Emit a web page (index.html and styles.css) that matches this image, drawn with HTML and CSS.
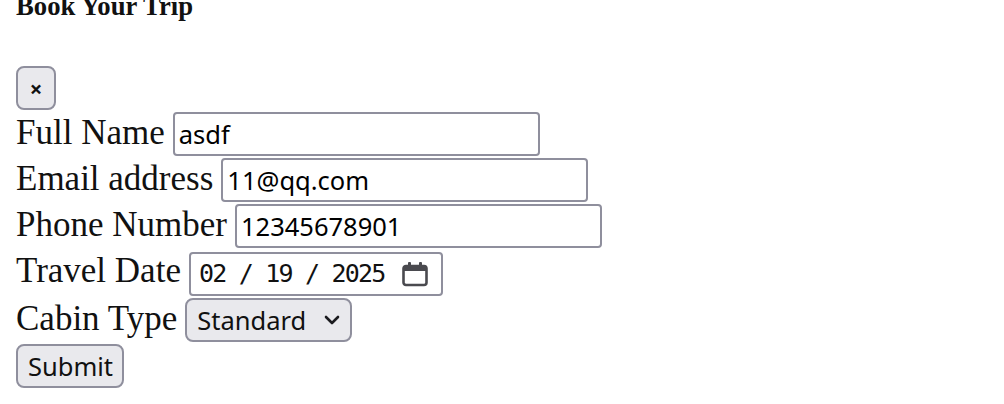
FILE: index.html
```html
<!DOCTYPE html>
<html lang="en">
<head>
<meta charset="utf-8">
<title>Book Your Trip</title>
<link rel="stylesheet" href="styles.css">
</head>
<body>
<h1 class="title">Book Your Trip</h1>
<form class="trip-form">
  <button type="button" class="btn close-btn">×</button>
  <div class="row">
    <label class="lbl" for="fullname">Full Name</label>
    <input class="field" id="fullname" type="text" value="asdf">
  </div>
  <div class="row">
    <label class="lbl" for="email">Email address</label>
    <input class="field" id="email" type="email" value="11@qq.com">
  </div>
  <div class="row row-phone">
    <label class="lbl" for="phone">Phone Number</label>
    <input class="field" id="phone" type="tel" value="12345678901">
  </div>
  <div class="row">
    <label class="lbl">Travel Date</label>
    <div class="field date-field">
      <span class="date-text">02 / 19 / 2025</span>
      <svg class="cal-icon" width="28" height="26" viewBox="0 0 28 26" aria-hidden="true">
        <rect x="2.5" y="5" width="23" height="19" rx="2.5" fill="none" stroke="#4a4a4f" stroke-width="2.6"/>
        <rect x="2.5" y="5" width="23" height="5" fill="#4a4a4f"/>
        <rect x="7" y="1" width="3" height="6" rx="1" fill="#4a4a4f"/>
        <rect x="18" y="1" width="3" height="6" rx="1" fill="#4a4a4f"/>
      </svg>
    </div>
  </div>
  <div class="row">
    <label class="lbl" for="cabin">Cabin Type</label>
    <div class="select-wrap">
      <select class="btn select" id="cabin">
        <option>Standard</option>
        <option>Deluxe</option>
        <option>Suite</option>
      </select>
      <svg class="chev" width="16" height="10" viewBox="0 0 16 10" aria-hidden="true">
        <path d="M2 2 L8 8 L14 2" fill="none" stroke="#1b1b1f" stroke-width="2.6" stroke-linecap="round" stroke-linejoin="round"/>
      </svg>
    </div>
  </div>
  <button type="submit" class="btn submit">Submit</button>
</form>
</body>
</html>
```

FILE: styles.css
```css
html, body {
  margin: 0;
  padding: 0;
  background: #ffffff;
}

body {
  padding: 0 16px;
  font-family: "Liberation Serif", "Times New Roman", serif;
  color: #111111;
}

.title {
  margin: -9px 0 45px 0;
  font-family: "Liberation Serif", "Times New Roman", serif;
  font-weight: 700;
  font-size: 26.7px;
  line-height: 30px;
  color: #111111;
}

.trip-form {
  display: flex;
  flex-direction: column;
  align-items: flex-start;
}

.btn {
  font-family: "Noto Sans", "Open Sans", sans-serif;
  font-size: 25.5px;
  color: #111111;
  background: #e9e9ed;
  border: 2px solid #8f8f9d;
  border-radius: 8px;
  box-sizing: border-box;
  height: 44px;
  margin: 0;
}

.close-btn {
  width: 40px;
  padding: 0;
  font-size: 22px;
  font-weight: 700;
  line-height: 1;
  display: flex;
  align-items: center;
  justify-content: center;
  margin-bottom: 2px;
}

.row {
  display: flex;
  align-items: baseline;
  gap: 8px;
  margin-bottom: 2px;
}

.row-phone {
  margin-bottom: 3px;
}

.lbl {
  font-family: "Liberation Serif", "Times New Roman", serif;
  font-size: 35px;
  color: #111111;
  white-space: nowrap;
}

.field {
  box-sizing: border-box;
  width: 367px;
  height: 44px;
  border: 2px solid #8f8f9d;
  border-radius: 4px;
  padding: 0 4px;
  margin: 0;
  font-family: "Noto Sans", "Open Sans", sans-serif;
  font-size: 25.5px;
  color: #000000;
  background: #ffffff;
  outline: none;
}

.date-field {
  width: 254px;
  height: 44px;
  display: flex;
  align-items: center;
  padding: 0 12px 0 8px;
  gap: 10px;
}

.date-text {
  font-family: "DejaVu Sans Mono", "Liberation Mono", monospace;
  font-size: 25px;
  letter-spacing: -1.8px;
  color: #111111;
  white-space: pre;
}

.cal-icon {
  flex: none;
  margin-left: auto;
}

.select-wrap {
  position: relative;
  display: inline-flex;
}

.select {
  -webkit-appearance: none;
  appearance: none;
  width: 167px;
  padding: 0 40px 0 10px;
}

.chev {
  position: absolute;
  right: 12px;
  top: 17px;
  pointer-events: none;
}

.submit {
  width: 108px;
  padding: 0 10px;
}
```
